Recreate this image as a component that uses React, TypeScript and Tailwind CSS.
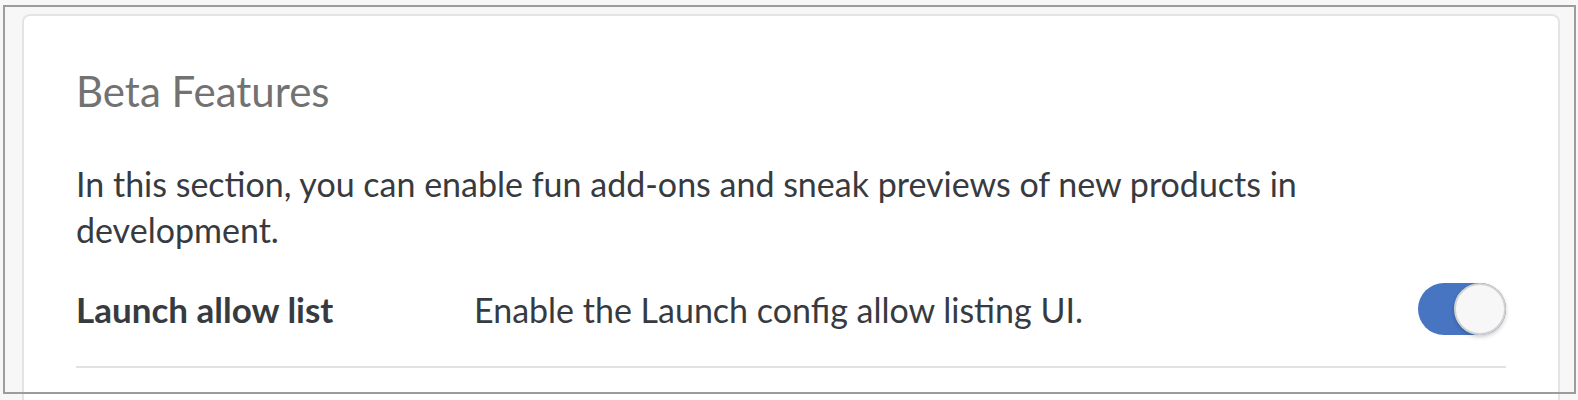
import React from "react";

export default function App() {
  return (
    <div className="relative h-[400px] w-[1578px] overflow-hidden bg-[#f7f7f7]" style={{ fontFamily: "Lato, 'Noto Sans', sans-serif" }}>
      <div className="pl-[22px] pr-[18px] pt-[14px]">
        <div className="h-[420px] rounded-[8px] border-2 border-[#e4e4e4] bg-white px-[52px] pt-[51px]">
          <h2 className="text-[42px] font-normal leading-[48px] text-[#727272]">Beta Features</h2>
          <p className="mt-[46px] w-[1300px] text-[34px] leading-[46px] text-[#373b3f]">
            In this section, you can enable fun add-ons and sneak previews of new products in development.
          </p>
          <div className="mt-[28px] flex h-[56px] items-center">
            <div className="w-[398px] text-[35px] font-bold text-[#373b3f]">Launch allow list</div>
            <div className="flex-1 text-[34px] text-[#373b3f]">Enable the Launch config allow listing UI.</div>
            <div className="relative h-[52px] w-[88px] rounded-full bg-[#4775c2]">
              <div className="absolute right-0 top-[0px] h-[52px] w-[52px] rounded-full border-2 border-[#d2d2d2] bg-[#f7f7f7] shadow-[0_2px_4px_rgba(0,0,0,0.2)]" />
            </div>
          </div>
          <div className="mt-[29px] h-[2px] bg-[#e2e2e2]" />
        </div>
      </div>
      <div className="pointer-events-none absolute left-[3px] top-[5px] h-[389px] w-[1573px] border-2 border-[#9c9c9c]" />
    </div>
  );
}
